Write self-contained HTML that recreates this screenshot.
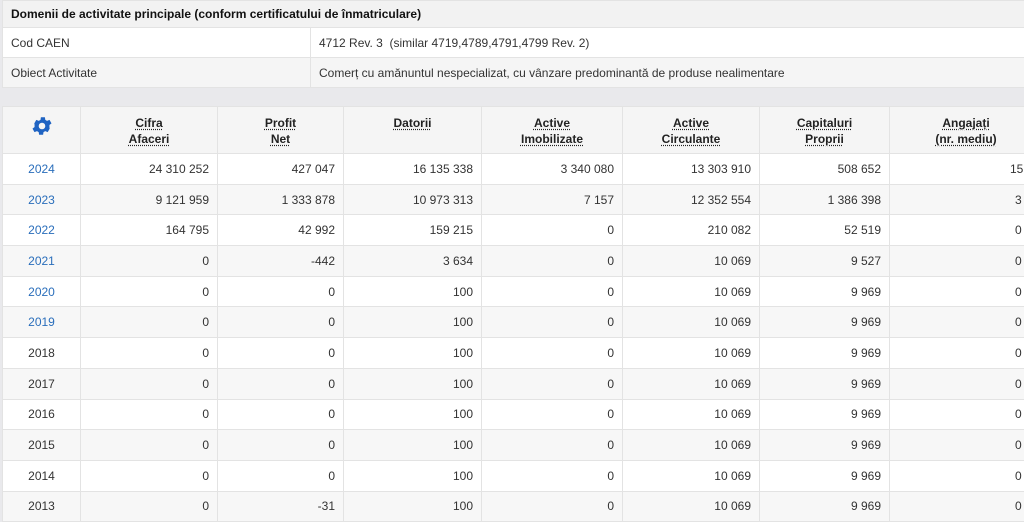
<!DOCTYPE html>
<html><head><meta charset="utf-8"><style>
body{margin:0;background:#e9e9ec;font-family:"Liberation Sans",Arial,sans-serif;font-size:12px;color:#333;width:1024px;height:521px;overflow:hidden;position:relative}
table{border-collapse:collapse;position:absolute;left:2px;table-layout:fixed}
td,th{border:1px solid #e3e3e3;padding:0 8px;white-space:nowrap;overflow:hidden}
#t1{top:0;width:1030px}
#t1 td{height:29px}
#t1 .h{background:#f2f2f2;font-weight:bold;color:#111;height:26px}
#t1 tr.w td{background:#fff}
#t1 tr.g td{background:#f5f5f5}
#t2{top:106px;width:1040px}
#t2 th{background:#f5f5f5;height:38px;font-weight:bold;color:#222;text-align:center;vertical-align:top;padding-top:8px;line-height:16px}
#t2 th span{text-decoration:underline dotted;text-underline-offset:2px}
#t2 td{height:29.7px;text-align:right}
#t2 td:first-child{text-align:center}
#t2 tr:nth-child(even) td{background:#fff}
#t2 tr:nth-child(odd) td{background:#f7f7f7}
a{color:#2a6ebb;text-decoration:none}
</style></head><body>
<table id="t1">
<colgroup><col style="width:308px"><col></colgroup>
<tr><td colspan="2" class="h">Domenii de activitate principale (conform certificatului de înmatriculare)</td></tr>
<tr class="w"><td>Cod CAEN</td><td>4712 Rev. 3 &nbsp;(similar 4719,4789,4791,4799 Rev. 2)</td></tr>
<tr class="g"><td>Obiect Activitate</td><td>Comerț cu amănuntul nespecializat, cu vânzare predominantă de produse nealimentare</td></tr>
</table>
<table id="t2">
<colgroup><col style="width:78px"><col style="width:137px"><col style="width:126px"><col style="width:138px"><col style="width:141px"><col style="width:137px"><col style="width:130px"><col style="width:153px"></colgroup>
<tr><th style="padding-top:7px"><svg width="24" height="24" viewBox="0 0 24 24"><path fill="#1f63c2" d="M19.4 13a7.5 7.5 0 0 0 0-2l2.1-1.6-2-3.5-2.5 1a7.3 7.3 0 0 0-1.7-1l-.4-2.7h-4l-.4 2.7a7.3 7.3 0 0 0-1.7 1l-2.5-1-2 3.5L4.6 11a7.5 7.5 0 0 0 0 2l-2.1 1.6 2 3.5 2.5-1a7.3 7.3 0 0 0 1.7 1l.4 2.7h4l.4-2.7a7.3 7.3 0 0 0 1.7-1l2.5 1 2-3.5zM12 15.3a3.3 3.3 0 1 1 0-6.6 3.3 3.3 0 0 1 0 6.6z"/></svg></th>
<th><span>Cifra</span><br><span>Afaceri</span></th><th><span>Profit</span><br><span>Net</span></th><th><span>Datorii</span></th><th><span>Active</span><br><span>Imobilizate</span></th><th><span>Active</span><br><span>Circulante</span></th><th><span>Capitaluri</span><br><span>Proprii</span></th><th><span>Angajați</span><br><span>(nr. mediu)</span></th></tr>
<tr><td><a>2024</a></td><td>24 310 252</td><td>427 047</td><td>16 135 338</td><td>3 340 080</td><td>13 303 910</td><td>508 652</td><td style="text-align:left;padding-left:120px">15</td></tr>
<tr><td><a>2023</a></td><td>9 121 959</td><td>1 333 878</td><td>10 973 313</td><td>7 157</td><td>12 352 554</td><td>1 386 398</td><td style="text-align:left;padding-left:125px">3</td></tr>
<tr><td><a>2022</a></td><td>164 795</td><td>42 992</td><td>159 215</td><td>0</td><td>210 082</td><td>52 519</td><td style="text-align:left;padding-left:125px">0</td></tr>
<tr><td><a>2021</a></td><td>0</td><td>-442</td><td>3 634</td><td>0</td><td>10 069</td><td>9 527</td><td style="text-align:left;padding-left:125px">0</td></tr>
<tr><td><a>2020</a></td><td>0</td><td>0</td><td>100</td><td>0</td><td>10 069</td><td>9 969</td><td style="text-align:left;padding-left:125px">0</td></tr>
<tr><td><a>2019</a></td><td>0</td><td>0</td><td>100</td><td>0</td><td>10 069</td><td>9 969</td><td style="text-align:left;padding-left:125px">0</td></tr>
<tr><td>2018</td><td>0</td><td>0</td><td>100</td><td>0</td><td>10 069</td><td>9 969</td><td style="text-align:left;padding-left:125px">0</td></tr>
<tr><td>2017</td><td>0</td><td>0</td><td>100</td><td>0</td><td>10 069</td><td>9 969</td><td style="text-align:left;padding-left:125px">0</td></tr>
<tr><td>2016</td><td>0</td><td>0</td><td>100</td><td>0</td><td>10 069</td><td>9 969</td><td style="text-align:left;padding-left:125px">0</td></tr>
<tr><td>2015</td><td>0</td><td>0</td><td>100</td><td>0</td><td>10 069</td><td>9 969</td><td style="text-align:left;padding-left:125px">0</td></tr>
<tr><td>2014</td><td>0</td><td>0</td><td>100</td><td>0</td><td>10 069</td><td>9 969</td><td style="text-align:left;padding-left:125px">0</td></tr>
<tr><td>2013</td><td>0</td><td>-31</td><td>100</td><td>0</td><td>10 069</td><td>9 969</td><td style="text-align:left;padding-left:125px">0</td></tr>
</table>
</body></html>
